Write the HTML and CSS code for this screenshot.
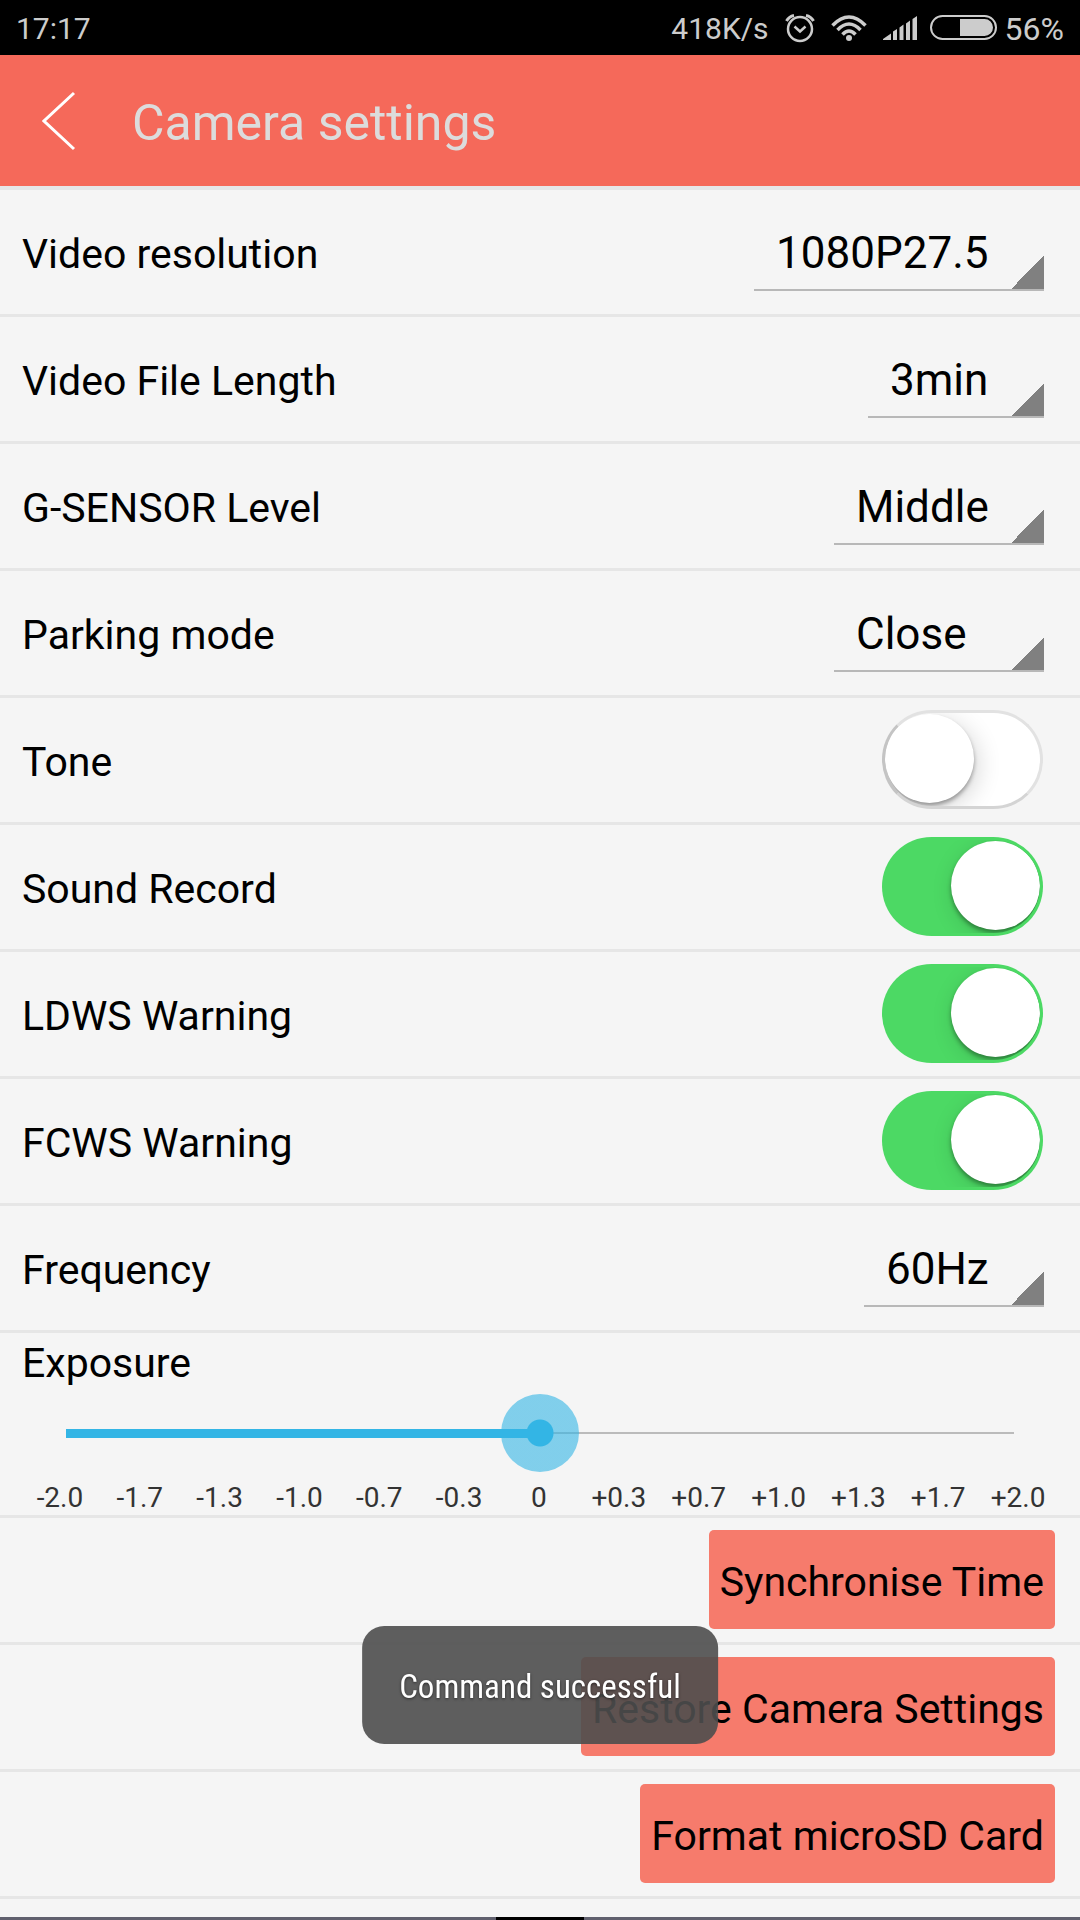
FILE: index.html
```html
<!DOCTYPE html>
<html lang="en">
<head>
<meta charset="utf-8">
<meta name="viewport" content="width=device-width, initial-scale=1">
<title>Camera settings</title>
<link rel="stylesheet" href="styles.css">
</head>
<body>
<div class="status-bar">
  <span class="clock">17:17</span>
  <span class="net-speed">418K/s</span>
  <svg class="icon-alarm" width="30" height="30" viewBox="0 0 30 30" fill="none" stroke="currentColor" aria-hidden="true">
    <circle cx="15" cy="16" r="12" stroke-width="2.5"/>
    <path d="M9.500 13.500l5.500 5 5.500-5" stroke-width="2.500"/>
    <path d="M1.500 8Q4 3.500 9 2.500M28.500 8Q26 3.500 21 2.500" stroke-width="3"/>
  </svg>
  <svg class="icon-wifi" width="36" height="28" viewBox="0 0 36 28" fill="none" stroke="currentColor" stroke-width="3.500" aria-hidden="true">
    <path d="M1.500 11.500Q18-5.500 34.500 11.500M6.500 16Q18 4 29.500 16M11.500 20.500Q18 13.500 24.500 20.500"/>
    <circle cx="18" cy="24" r="3" fill="currentColor" stroke="none"/>
  </svg>
  <svg class="icon-signal" width="34" height="24" viewBox="0 0 34 24" fill="currentColor" aria-hidden="true">
    <path d="M0 24v-1l8-5.500V24zM10 24v-8.500l4-2.500v11zM16.500 24V11.500l4-3V24zM23 24V7.500l4-3V24zM29.500 24V3L34 0v24z"/>
  </svg>
  <svg class="icon-battery" width="67" height="25" viewBox="0 0 67 25" aria-hidden="true">
    <rect x="1" y="1" width="65" height="23" rx="11.500" fill="none" stroke="currentColor" stroke-width="2"/>
    <path d="M30 4h24.500a8.500 8.500 0 0 1 0 17H30z" fill="currentColor"/>
  </svg>
  <span class="battery-level">56%</span>
</div>

<header class="app-bar">
  <button class="back" type="button" aria-label="Back">
    <svg width="34" height="60" viewBox="0 0 34 60" fill="none" stroke="currentColor" stroke-width="3" aria-hidden="true"><path d="M32 2L2 30l30 28"/></svg>
  </button>
  <h1 class="title">Camera settings</h1>
</header>

<main class="settings">
  <div class="row">
    <label class="label" for="resolution">Video resolution</label>
    <select class="spinner" id="resolution"><option>1080P27.5</option></select>
  </div>
  <div class="row">
    <label class="label" for="length">Video File Length</label>
    <select class="spinner" id="length"><option>3min</option></select>
  </div>
  <div class="row">
    <label class="label" for="gsensor">G-SENSOR Level</label>
    <select class="spinner" id="gsensor"><option>Middle</option></select>
  </div>
  <div class="row">
    <label class="label" for="parking">Parking mode</label>
    <select class="spinner" id="parking"><option>Close</option><option>Middle</option></select>
  </div>
  <div class="row">
    <label class="label" for="tone">Tone</label>
    <input class="switch" id="tone" type="checkbox">
  </div>
  <div class="row">
    <label class="label" for="sound">Sound Record</label>
    <input class="switch" id="sound" type="checkbox" checked>
  </div>
  <div class="row">
    <label class="label" for="ldws">LDWS Warning</label>
    <input class="switch" id="ldws" type="checkbox" checked>
  </div>
  <div class="row">
    <label class="label" for="fcws">FCWS Warning</label>
    <input class="switch" id="fcws" type="checkbox" checked>
  </div>
  <div class="row">
    <label class="label" for="frequency">Frequency</label>
    <select class="spinner" id="frequency"><option>60Hz</option></select>
  </div>
  <div class="exposure">
    <label class="label" for="exposure">Exposure</label>
    <input class="slider" id="exposure" type="range" min="-6" max="6" value="0">
    <div class="scale">
      <span>-2.0</span><span>-1.7</span><span>-1.3</span><span>-1.0</span><span>-0.7</span><span>-0.3</span><span>0</span><span>+0.3</span><span>+0.7</span><span>+1.0</span><span>+1.3</span><span>+1.7</span><span>+2.0</span>
    </div>
  </div>
  <div class="row row-action"><button class="action" type="button">Synchronise Time</button></div>
  <div class="row row-action"><button class="action" type="button">Restore Camera Settings</button></div>
  <div class="row row-action"><button class="action" type="button">Format microSD Card</button></div>
</main>

<div class="toast" role="status">Command successful</div>
<div class="nav-edge"><span class="nav-handle"></span></div>
</body>
</html>
```
FILE: styles.css
```css
* {
  box-sizing: border-box;
}

body {
  display: flex;
  flex-direction: column;
  min-height: 100vh;
  margin: 0;
  background: #f5f5f5;
  color: #000;
  font-family: Roboto, "Noto Sans", sans-serif;
}

button,
input,
select {
  appearance: none;
  margin: 0;
  border: 0;
  border-radius: 0;
  color: inherit;
  font-family: inherit;
}

/* System status bar */
.status-bar {
  display: flex;
  align-items: center;
  height: 55px;
  padding: 0 16px;
  background: #000;
  color: #ccc;
  font-size: 30px;
  line-height: 36px;
}

.status-bar span {
  padding-top: 3px;
}

.clock {
  margin-right: auto;
}

.icon-alarm {
  margin-left: 16px;
}

.icon-wifi {
  margin-left: 16px;
}

.icon-signal {
  margin-left: 16px;
}

.icon-battery {
  margin: 0 8px 0 13px;
}

.battery-level {
  font-size: 32px;
}

/* Title bar */
.app-bar {
  display: flex;
  align-items: center;
  gap: 56px;
  height: 135px;
  padding: 0 42px;
  border-bottom: 4px solid #e6e6e8;
  background: #f5695a;
}

.back {
  display: flex;
  padding: 0;
  background: none;
  color: #fff;
}

.title {
  margin: 0;
  padding-top: 4px;
  color: #dcdcdc;
  font-size: 50px;
  font-weight: 400;
  line-height: 60px;
}

/* Setting rows */
.row {
  display: flex;
  align-items: center;
  justify-content: space-between;
  height: 127px;
  padding: 0 36px 0 22px;
  border-bottom: 3px solid #e6e6e6;
}

.row-action {
  justify-content: flex-end;
  padding-right: 25px;
}

.label {
  font-size: 41px;
  line-height: 50px;
}

.row .label {
  padding-top: 4px;
}

.spinner {
  height: 78px;
  padding: 2px 55px 0 22px;
  background:
    linear-gradient(#b8b8b8, #b8b8b8) bottom / 100% 2px no-repeat,
    linear-gradient(135deg, transparent 50%, #808080 50%) right 0 bottom 2px / 33px 33px no-repeat;
  font-size: 44px;
  line-height: 76px;
}

.switch {
  display: flex;
  width: 161px;
  height: 99px;
  margin: 0 1px 1px 0;
  padding: 1px 0 0;
  border: 3px solid #e2e2e2;
  border-bottom-color: #d4d4d4;
  border-left-color: #c4c4c4;
  border-radius: 50px;
  background: #fff;
  overflow: hidden;
}

.switch::before {
  content: "";
  width: 89px;
  height: 89px;
  border-radius: 50%;
  background: #fff;
  box-shadow: 0 3px 4px rgba(0, 0, 0, .35), 4px 6px 24px rgba(0, 0, 0, .16);
}

.switch:checked {
  justify-content: flex-end;
  border-color: transparent;
  background: #4cd964 border-box;
}

/* Exposure slider */
.exposure {
  display: flex;
  flex-direction: column;
  height: 185px;
  border-bottom: 3px solid #e6e6e6;
}

.exposure .label {
  padding: 5px 22px 0;
}

.slider {
  height: 78px;
  margin: 6px 66px 0;
  background:
    linear-gradient(#33b5e5, #33b5e5) left center / 50% 9px no-repeat,
    linear-gradient(#bbb, #bbb) center / 100% 2px no-repeat;
}

.slider::-webkit-slider-thumb {
  appearance: none;
  width: 78px;
  height: 78px;
  border-radius: 50%;
  background: radial-gradient(circle, #33b5e5 13px, rgba(51, 181, 229, .6) 14px);
}

.scale {
  display: grid;
  grid-template-columns: repeat(13, 1fr);
  margin-top: 10px;
  padding: 0 22px 0 20px;
  color: #333;
  font-size: 28px;
  line-height: 32px;
  text-align: center;
}

.action {
  height: 99px;
  margin-bottom: 1px;
  padding: 4px 11px 0;
  border-radius: 5px;
  background: #f67b6c;
  font-size: 41px;
  line-height: 50px;
}

/* Toast message over the list */
.toast {
  position: fixed;
  bottom: 176px;
  left: 50%;
  transform: translateX(-50%);
  padding: 43px 37px 39px;
  border-radius: 22px;
  background: rgba(78, 78, 78, .9);
  color: #fff;
  font-family: "Roboto Condensed", Roboto, sans-serif;
  font-size: 33px;
  line-height: 36px;
  text-shadow: 0 1px 3px rgba(0, 0, 0, .6);
  white-space: nowrap;
}

/* Edge of the system navigation bar */
.nav-edge {
  display: flex;
  justify-content: center;
  height: 3px;
  margin-top: auto;
  background: #60606e;
}

.nav-handle {
  width: 88px;
  background: #000;
}
```
